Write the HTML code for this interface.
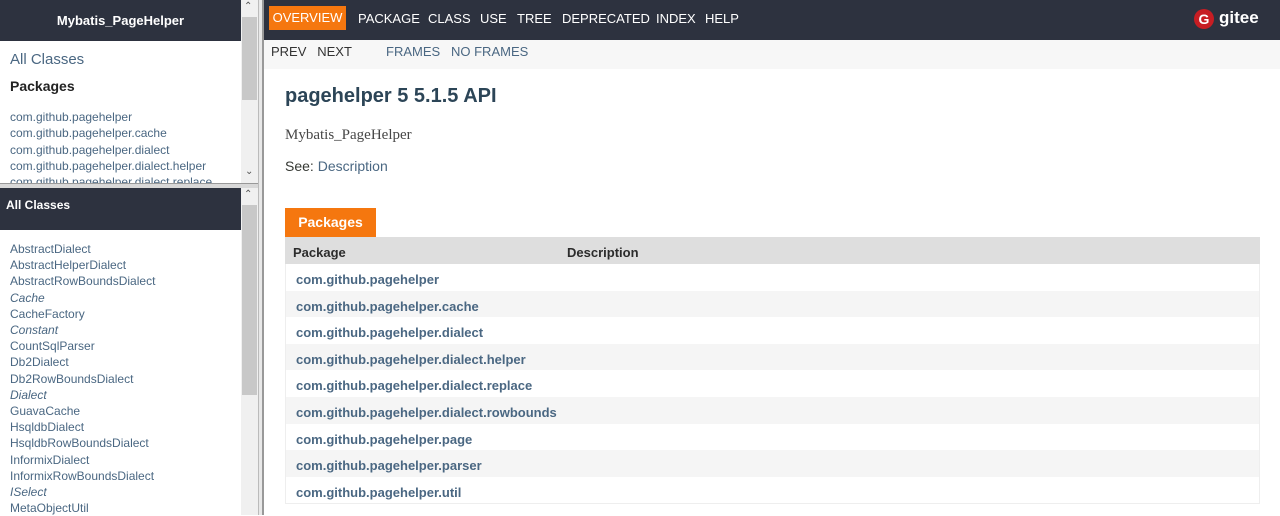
<!DOCTYPE html>
<html><head><meta charset="utf-8"><style>
*{margin:0;padding:0;box-sizing:border-box}
body{width:1280px;height:515px;overflow:hidden;font-family:"Liberation Sans",Arial,sans-serif;background:#fff;position:relative}
.a{position:absolute}
.dark{background:#2d323f;color:#fff}
.lnk{color:#4a6782}
.sb{background:#f0f0f0}
.th{background:#c8c8c8}
.nv{position:absolute;top:11px;font-size:13px;color:#fff}
</style></head><body>
<!-- left upper -->
<div class="a dark" style="left:0;top:0;width:241px;height:41px;font-weight:bold;font-size:13px;text-align:center;line-height:41px">Mybatis_PageHelper</div>
<div class="a lnk" style="left:10px;top:51px;font-size:15px">All Classes</div>
<div class="a" style="left:10px;top:78px;font-size:14px;font-weight:bold;color:#222">Packages</div>
<div class="a lnk" style="left:10px;top:109px;font-size:12px;line-height:16.3px;height:74px;overflow:hidden;width:231px">com.github.pagehelper<br>com.github.pagehelper.cache<br>com.github.pagehelper.dialect<br>com.github.pagehelper.dialect.helper<br>com.github.pagehelper.dialect.replace</div>
<div class="a sb" style="left:241px;top:0;width:17px;height:183px"></div>
<div class="a th" style="left:242px;top:17px;width:15px;height:83px"></div>
<div class="a" style="left:244px;top:1px;font-size:10px;color:#555">⌃</div>
<div class="a" style="left:245px;top:166px;font-size:10px;color:#555">⌄</div>
<div class="a" style="left:0;top:183px;width:258px;height:5px;background:#d8d8d8;border-top:1px solid #999"></div>
<!-- left lower -->
<div class="a dark" style="left:0;top:188px;width:241px;height:42px;font-weight:bold;font-size:12px;padding:10px 6px">All Classes</div>
<div class="a lnk" style="left:10px;top:241px;font-size:12px;line-height:16.2px">AbstractDialect<br>AbstractHelperDialect<br>AbstractRowBoundsDialect<br><i>Cache</i><br>CacheFactory<br><i>Constant</i><br>CountSqlParser<br>Db2Dialect<br>Db2RowBoundsDialect<br><i>Dialect</i><br>GuavaCache<br>HsqldbDialect<br>HsqldbRowBoundsDialect<br>InformixDialect<br>InformixRowBoundsDialect<br><i>ISelect</i><br>MetaObjectUtil</div>
<div class="a sb" style="left:241px;top:188px;width:17px;height:327px"></div>
<div class="a th" style="left:242px;top:205px;width:15px;height:190px"></div>
<div class="a" style="left:244px;top:189px;font-size:10px;color:#555">⌃</div>
<!-- divider -->
<div class="a" style="left:258px;top:0;width:6px;height:515px;background:#e8e8e8;border-left:1px solid #bbb;border-right:2px solid #999"></div>
<!-- right -->
<div class="a dark" style="left:264px;top:0;width:1016px;height:40px"></div>
<div class="a" style="left:269px;top:6px;width:77px;height:24px;background:#f5770f;color:#fff;font-size:13px;line-height:24px;text-align:center">OVERVIEW</div>
<span class="nv" style="left:358px">PACKAGE</span>
<span class="nv" style="left:428px">CLASS</span>
<span class="nv" style="left:480px">USE</span>
<span class="nv" style="left:517px">TREE</span>
<span class="nv" style="left:562px">DEPRECATED</span>
<span class="nv" style="left:656px">INDEX</span>
<span class="nv" style="left:705px">HELP</span>
<div class="a" style="left:1194px;top:9px;width:20px;height:20px;border-radius:50%;background:#c71d23;color:#fff;font-weight:bold;font-size:14px;text-align:center;line-height:20px">G</div>
<div class="a" style="left:1219px;top:8px;font-size:17px;font-weight:bold;color:#fff">gitee</div>
<div class="a" style="left:264px;top:40px;width:1016px;height:29px;background:#f7f7f7"></div>
<div class="a" style="left:271px;top:44px;font-size:13px;color:#333">PREV&nbsp;&nbsp; NEXT</div>
<div class="a lnk" style="left:386px;top:44px;font-size:13px">FRAMES&nbsp;&nbsp; NO FRAMES</div>
<div class="a" style="left:285px;top:85px;font-size:20px;font-weight:bold;color:#2c4557">pagehelper 5 5.1.5 API</div>
<div class="a" style="left:285px;top:127px;font-size:15px;font-family:'Liberation Serif',serif;color:#474747">Mybatis_PageHelper</div>
<div class="a" style="left:285px;top:158px;font-size:14px;color:#353833">See: <span class="lnk">Description</span></div>
<div class="a" style="left:285px;top:208px;width:91px;height:29px;background:#f5770f;color:#fff;font-weight:bold;font-size:14px;line-height:29px;text-align:center">Packages</div>
<div class="a" style="left:285px;top:237px;width:975px;height:267px;border:1px solid #eee;border-top:0"></div>
<div class="a" style="left:285px;top:237px;width:975px;height:27px;background:#dedede;font-weight:bold;font-size:13px;color:#2c2c2c;line-height:32px"><span style="position:absolute;left:8px">Package</span><span style="position:absolute;left:282px">Description</span></div>
<div class="a" style="left:286px;top:264px;width:973px;font-weight:bold;font-size:13px">
<div style="height:26.6px;line-height:32px;padding-left:10px" class="lnk">com.github.pagehelper</div>
<div style="height:26.6px;line-height:32px;padding-left:10px;background:#f5f5f5" class="lnk">com.github.pagehelper.cache</div>
<div style="height:26.6px;line-height:32px;padding-left:10px" class="lnk">com.github.pagehelper.dialect</div>
<div style="height:26.6px;line-height:32px;padding-left:10px;background:#f5f5f5" class="lnk">com.github.pagehelper.dialect.helper</div>
<div style="height:26.6px;line-height:32px;padding-left:10px" class="lnk">com.github.pagehelper.dialect.replace</div>
<div style="height:26.6px;line-height:32px;padding-left:10px;background:#f5f5f5" class="lnk">com.github.pagehelper.dialect.rowbounds</div>
<div style="height:26.6px;line-height:32px;padding-left:10px" class="lnk">com.github.pagehelper.page</div>
<div style="height:26.6px;line-height:32px;padding-left:10px;background:#f5f5f5" class="lnk">com.github.pagehelper.parser</div>
<div style="height:26.6px;line-height:32px;padding-left:10px" class="lnk">com.github.pagehelper.util</div>
</div>
</body></html>
